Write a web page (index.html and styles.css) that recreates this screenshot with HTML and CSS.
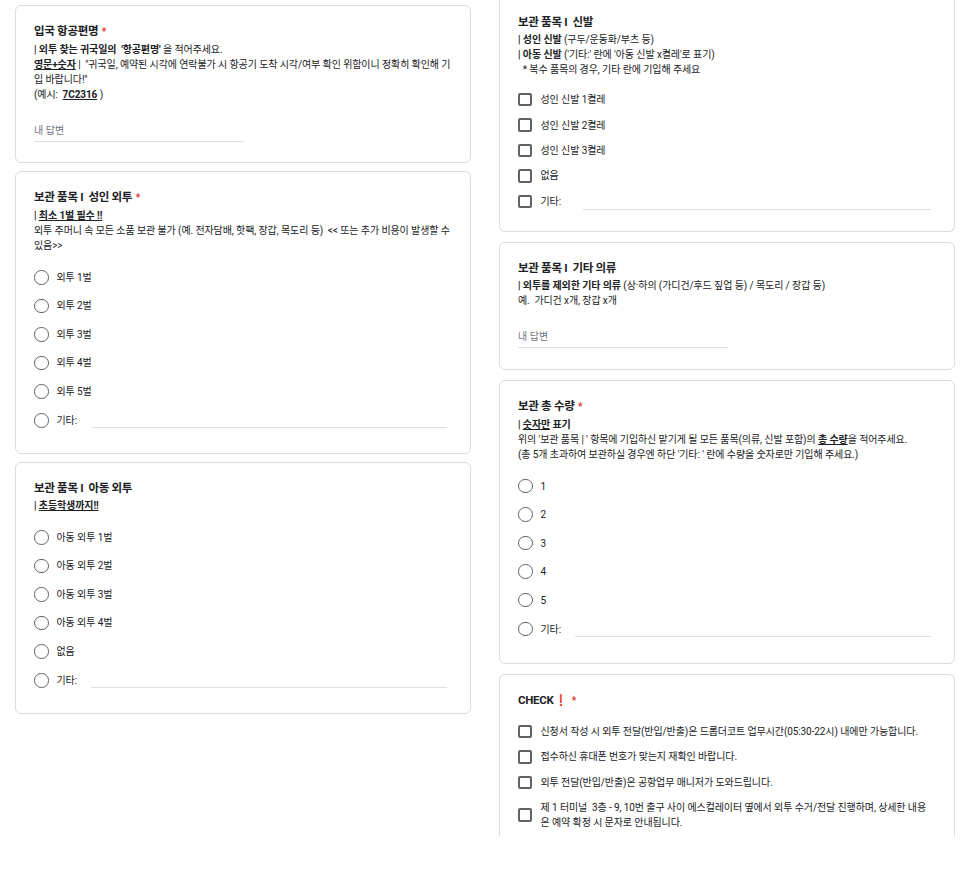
FILE: index.html
```html
<!DOCTYPE html>
<html lang="ko">
<head>
<meta charset="UTF-8" />
<meta name="viewport" content="width=device-width, initial-scale=1" />
<title>드롭더코트 외투 보관 신청서</title>
<link rel="stylesheet" href="styles.css">
</head>
<body>

<div class="form">

  <!-- 왼쪽 열 -->
  <div class="col left">
    <div class="card">
      <div class="q-title">입국 항공편명 <span class="req">*</span></div>
      <div class="q-desc">
        <b>| 외투 찾는 귀국일의&nbsp; '항공편명'</b> 을 적어주세요.<br>
        <b><u>영문+숫자</u></b> |&nbsp; "귀국일, 예약된 시각에 연락불가 시 항공기 도착 시각/여부 확인 위함이니 정확히 확인해 기입 바랍니다!"<br>
        (예시:&nbsp; <b><u>7C2316</u></b> )
      </div>
      <div class="answer">내 답변</div>
    </div>

    <div class="card">
      <div class="q-title">보관 품목 I&nbsp; 성인 외투 <span class="req">*</span></div>
      <div class="q-desc">
        <b>| <u>최소 1벌 필수 !!</u></b><br>
        외투 주머니 속 모든 소품 보관 불가 (예. 전자담배, 핫팩, 장갑, 목도리 등)&nbsp; &lt;&lt; 또는 추가 비용이 발생할 수 있음&gt;&gt;
      </div>
      <ul class="options radio">
        <li><span class="mark"></span>외투 1벌</li>
        <li><span class="mark"></span>외투 2벌</li>
        <li><span class="mark"></span>외투 3벌</li>
        <li><span class="mark"></span>외투 4벌</li>
        <li><span class="mark"></span>외투 5벌</li>
        <li><span class="mark"></span>기타: <span class="other"></span></li>
      </ul>
    </div>

    <div class="card">
      <div class="q-title">보관 품목 I&nbsp; 아동 외투</div>
      <div class="q-desc"><b>| <u>초등학생까지!!</u></b></div>
      <ul class="options radio">
        <li><span class="mark"></span>아동 외투 1벌</li>
        <li><span class="mark"></span>아동 외투 2벌</li>
        <li><span class="mark"></span>아동 외투 3벌</li>
        <li><span class="mark"></span>아동 외투 4벌</li>
        <li><span class="mark"></span>없음</li>
        <li><span class="mark"></span>기타: <span class="other"></span></li>
      </ul>
    </div>
  </div>

  <!-- 오른쪽 열 -->
  <div class="col right">
    <div class="card cut-top">
      <div class="q-title">보관 품목 I&nbsp; 신발</div>
      <div class="q-desc">
        <b>| 성인 신발</b> (구두/운동화/부츠 등)<br>
        <b>| 아동 신발</b> ('기타:' 란에 '아동 신발 x켤레'로 표기)<br>
        &nbsp; * 복수 품목의 경우, 기타 란에 기입해 주세요
      </div>
      <ul class="options check">
        <li><span class="mark"></span>성인 신발 1켤레</li>
        <li><span class="mark"></span>성인 신발 2켤레</li>
        <li><span class="mark"></span>성인 신발 3켤레</li>
        <li><span class="mark"></span>없음</li>
        <li><span class="mark"></span>기타: <span class="other"></span></li>
      </ul>
    </div>

    <div class="card">
      <div class="q-title">보관 품목 I&nbsp; 기타 의류</div>
      <div class="q-desc">
        <b>| 외투를 제외한 기타 의류</b> (상·하의 (가디건/후드 짚업 등) / 목도리 / 장갑 등)<br>
        예.&nbsp; 가디건 x개, 장갑 x개
      </div>
      <div class="answer">내 답변</div>
    </div>

    <div class="card">
      <div class="q-title">보관 총 수량 <span class="req">*</span></div>
      <div class="q-desc">
        <b>| <u>숫자만</u> 표기</b><br>
        위의 '보관 품목 | ' 항목에 기입하신 맡기게 될 모든 품목(의류, 신발 포함)의 <b><u>총 수량</u></b>을 적어주세요.<br>
        (총 5개 초과하여 보관하실 경우엔 하단 '기타: ' 란에 수량을 숫자로만 기입해 주세요.)
      </div>
      <ul class="options radio">
        <li><span class="mark"></span>1</li>
        <li><span class="mark"></span>2</li>
        <li><span class="mark"></span>3</li>
        <li><span class="mark"></span>4</li>
        <li><span class="mark"></span>5</li>
        <li><span class="mark"></span>기타: <span class="other"></span></li>
      </ul>
    </div>

    <div class="card cut-bottom">
      <div class="q-title">CHECK<span class="bang">❗</span> <span class="req">*</span></div>
      <ul class="options check">
        <li><span class="mark"></span>신청서 작성 시 외투 전달(반입/반출)은 드롭더코트 업무시간(05:30-22시) 내에만 가능합니다.</li>
        <li><span class="mark"></span>접수하신 휴대폰 번호가 맞는지 재확인 바랍니다.</li>
        <li><span class="mark"></span>외투 전달(반입/반출)은 공항업무 매니저가 도와드립니다.</li>
        <li><span class="mark"></span><span class="wrap">제 1 터미널&nbsp; 3층 - 9, 10번 출구 사이 에스컬레이터 옆에서 외투 수거/전달 진행하며, 상세한 내용은 예약 확정 시 문자로 안내됩니다.</span></li>
      </ul>
    </div>
  </div>

</div>

</body>
</html>
```

FILE: styles.css
```css
body { margin: 0; background: #fff; color: #202124; font-family: Roboto, "Noto Sans CJK KR", sans-serif; }

.form { display: grid; grid-template-columns: 456px 456px; column-gap: 28px; padding: 5px 0 0 15px; }
.col { display: flex; flex-direction: column; }
.col.left { gap: 8px; }
.col.right { gap: 10px; }

.card { background: #fff; border: 1px solid #dadce0; border-radius: 6px; padding: 17px 18px 19px; }
.left .card { padding-bottom: 18px; }
.card.cut-top { margin-top: -8px; border-top: none; border-top-left-radius: 0; border-top-right-radius: 0; padding-top: 17px; }
.card.cut-bottom { height: 162px; box-sizing: border-box; border-bottom: none; border-bottom-left-radius: 0; border-bottom-right-radius: 0; padding-bottom: 0; overflow: hidden; }

.q-title { font-size: 11.5px; font-weight: bold; line-height: 16px; letter-spacing: -0.3px; }
.req { color: #d93025; font-size: 10px; padding-left: 1px; }
.bang { color: #d93025; font-family: "DejaVu Sans", sans-serif; font-size: 11px; padding-left: 1px; }

.q-desc { margin-top: 2px; font-size: 10px; line-height: 15px; letter-spacing: -0.1px; }
.q-desc b { font-weight: bold; }
.q-desc u { text-underline-offset: 1px; }

.answer { margin: 21px 0 2px; width: 210px; color: #70757a; font-size: 10px; line-height: 15px; padding-bottom: 3px; border-bottom: 1px solid #e0e0e0; }

.options { list-style: none; margin: 10px 0 0; padding: 0; font-size: 10px; line-height: 15px; letter-spacing: -0.1px; }
.options li { display: flex; align-items: center; }
.options .mark { flex: none; box-sizing: border-box; border-color: #5f6368; border-style: solid; }
.other { flex: 1; height: 1px; background: #e0e0e0; align-self: center; margin-top: 15px; margin-right: 5px; }

.radio li { padding: 6.75px 0; gap: 8px; }
.radio .mark { width: 14.5px; height: 14.5px; border-width: 1.5px; border-radius: 50%; }
.radio .other { margin-left: 6px; }

.check { margin-bottom: -3px; }
.check li { padding: 5.2px 0; gap: 9px; }
.check .mark { width: 13.5px; height: 13.5px; border-width: 2px; border-radius: 2px; }
.check .other { margin-left: 13px; }
.check .wrap { padding-right: 8px; }
```
